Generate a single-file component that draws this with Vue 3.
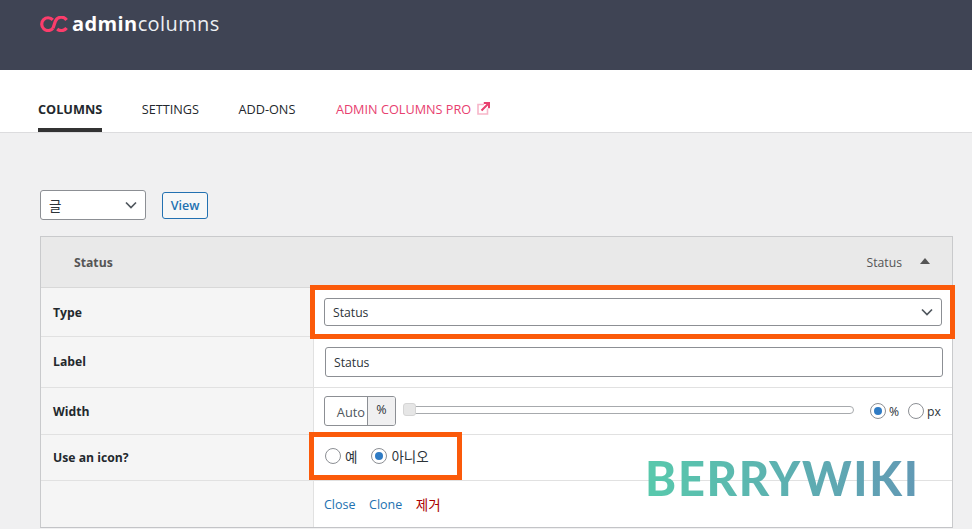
<template>
  <div class="page">
    <header class="top">
      <div class="logo">
        <svg class="logo-icon" width="28" height="16" viewBox="0 0 28 16" fill="none" stroke="#fb3d6b" stroke-width="3.200">
          <path d="M12.800 3.800A6.400 6.400 0 1 0 13 12.300" />
          <path d="M26.600 4A6.400 6.400 0 0 0 15.300 5.400L13 12.300" />
          <path d="M17.200 13A6.400 6.400 0 0 0 26.600 12" />
        </svg>
        <span class="logo-text"><b>admin</b>columns</span>
      </div>
    </header>

    <nav class="tabs">
      <a v-for="tab in tabs" :key="tab.label" class="tab" :class="{ active: tab.active, pro: tab.pro }">
        {{ tab.label }}
        <svg v-if="tab.pro" class="ext" width="13" height="13" viewBox="0 0 13 13" fill="none">
          <path d="M7 2.500H1v9.500h9.500V6.500" stroke="#f7b6c9" stroke-width="1.600" />
          <path d="M4.500 8.500L11 2M6.800 1h5.200v5.200" stroke="#e8406f" stroke-width="2" />
        </svg>
      </a>
    </nav>

    <main class="content">
      <div class="toolbar">
        <div class="select small">
          <span class="korean big">글</span>
          <svg class="chev" width="12" height="8" viewBox="0 0 12 8" fill="none"><path d="M1 1.500l5 5 5-5" stroke="#50575e" stroke-width="1.700" /></svg>
        </div>
        <button class="view">View</button>
      </div>

      <section class="box">
        <div class="box-head">
          <strong>Status</strong>
          <span class="head-right">
            <span>Status</span>
            <i class="arrow"></i>
          </span>
        </div>

        <div class="row row-type">
          <div class="label">Type</div>
          <div class="cell">
            <div class="select wide">
              <span>Status</span>
              <svg class="chev" width="12" height="8" viewBox="0 0 12 8" fill="none"><path d="M1 1.500l5 5 5-5" stroke="#50575e" stroke-width="1.700" /></svg>
            </div>
            <div class="mark mark-type"></div>
          </div>
        </div>

        <div class="row row-label">
          <div class="label">Label</div>
          <div class="cell"><input class="text" value="Status" /></div>
        </div>

        <div class="row row-width">
          <div class="label">Width</div>
          <div class="cell width-cell">
            <div class="width-input">
              <span class="auto">Auto</span>
              <span class="unit">%</span>
            </div>
            <div class="slider"><span class="thumb"></span></div>
            <div class="units">
              <label class="radio"><i class="dot on"></i>%</label>
              <label class="radio"><i class="dot"></i>px</label>
            </div>
          </div>
        </div>

        <div class="row row-icon">
          <div class="label">Use an icon?</div>
          <div class="cell icon-cell">
            <label class="radio"><i class="dot"></i><span class="korean big">예</span></label>
            <label class="radio"><i class="dot on"></i><span class="korean big">아니오</span></label>
            <div class="mark mark-icon"></div>
          </div>
        </div>

        <div class="row row-actions">
          <div class="label"></div>
          <div class="cell actions">
            <a>Close</a>
            <a>Clone</a>
            <a class="remove korean big">제거</a>
          </div>
        </div>
      </section>
    </main>

    <div class="watermark">BERRYWIKI</div>
  </div>
</template>

<script setup>
const tabs = [
  { label: "COLUMNS", active: true },
  { label: "SETTINGS" },
  { label: "ADD-ONS" },
  { label: "ADMIN COLUMNS PRO", pro: true },
];
</script>

<style>
html,
body {
  margin: 0;
  background: #f0f0f1;
  overflow: hidden;
}
</style>

<style scoped>
.page {
  position: relative;
  height: 529px;
  overflow: hidden;
  font-family: "Open Sans", "Noto Sans CJK KR", sans-serif;
  font-size: 12.200px;
  color: #2c3338;
  background: #f0f0f1;
}

.top {
  height: 70px;
  box-sizing: border-box;
  padding: 12px 0 0 40px;
  background: #3f4454;
}

.logo {
  display: flex;
  align-items: center;
  gap: 4px;
}

.logo-text {
  font-size: 20px;
  line-height: 24px;
  color: #eef0f3;
  letter-spacing: 0.400px;
}

.logo-text b {
  font-weight: 700;
  color: #fff;
}

.tabs {
  display: flex;
  height: 62px;
  padding-left: 38px;
  gap: 39.500px;
  background: #fff;
  border-bottom: 1px solid #dcdcde;
}

.tab {
  display: flex;
  align-items: flex-start;
  gap: 6px;
  height: 62px;
  box-sizing: border-box;
  padding-top: 31px;
  font-size: 12.700px;
  line-height: 17px;
  color: #23282d;
}

.tab.active {
  font-weight: 700;
  border-bottom: 4px solid #333;
}

.tab.pro {
  margin-left: 1px;
  color: #e8406f;
}

.ext {
  margin-top: 1px;
}

.content {
  padding: 57px 19px 0 40px;
}

.toolbar {
  display: flex;
  align-items: center;
  gap: 16px;
  height: 30px;
  margin-bottom: 16px;
}

.select {
  display: flex;
  align-items: center;
  justify-content: space-between;
  box-sizing: border-box;
  background: #fff;
  border: 1px solid #8c8f94;
  border-radius: 3px;
}

.select.small {
  width: 106px;
  height: 30px;
  padding: 0 8px 0 8px;
}

.select.wide {
  width: 618px;
  height: 28px;
  padding: 0 8px;
}

.korean {
  font-family: "Noto Sans CJK KR", sans-serif;
}

.big {
  font-size: 13.500px;
}

.view {
  width: 46px;
  height: 27px;
  padding: 0;
  font: 600 12.500px "Open Sans", sans-serif;
  color: #2271b1;
  background: #f6f7f7;
  border: 1px solid #2271b1;
  border-radius: 3px;
}

.box {
  border: 1px solid #c9cacc;
  border-bottom-color: #c3c4c7;
  background: #fff;
  height: 292px;
  box-sizing: border-box;
}

.box-head {
  display: flex;
  align-items: center;
  justify-content: space-between;
  box-sizing: border-box;
  height: 51px;
  padding: 0 22px 0 33px;
  background: #e9e9e9;
  border-bottom: 1px solid #d8d8d8;
  color: #555;
}

.head-right {
  display: flex;
  align-items: center;
  gap: 18px;
}

.arrow {
  width: 0;
  height: 0;
  margin-bottom: 2px;
  border-left: 5px solid transparent;
  border-right: 5px solid transparent;
  border-bottom: 6px solid #555;
}

.row {
  display: flex;
  box-sizing: border-box;
  border-bottom: 1px solid #e1e1e1;
}

.row:last-child {
  border-bottom: none;
}

.row-type { height: 49px; }
.row-label { height: 51px; }
.row-width { height: 47px; }
.row-icon { height: 46px; }
.row-actions { height: 46px; }

.label {
  flex: 0 0 273px;
  box-sizing: border-box;
  display: flex;
  align-items: center;
  padding-left: 12px;
  font-weight: 700;
  color: #23282d;
  background: #f5f5f5;
  border-right: 1px solid #e1e1e1;
}

.row-label .label {
  padding-bottom: 2px;
}

.row-width .label {
  padding-top: 1px;
}

.cell {
  position: relative;
  flex: 1;
  display: flex;
  align-items: center;
  padding-left: 10px;
}

.row-label .cell {
  padding-left: 11px;
}

.text {
  width: 618px;
  height: 30px;
  box-sizing: border-box;
  padding: 0 8px;
  font: inherit;
  color: #2c3338;
  border: 1px solid #8c8f94;
  border-radius: 3px;
  outline: none;
}

.width-cell {
  gap: 7px;
}

.width-input {
  display: flex;
  width: 72px;
  height: 30px;
  box-sizing: border-box;
  background: #fff;
  border: 1px solid #8c8f94;
  border-radius: 3px;
  overflow: hidden;
}

.auto {
  flex: 1;
  text-align: right;
  font-size: 12.800px;
  line-height: 30px;
  padding-right: 2px;
  color: #50575e;
}

.unit {
  width: 27px;
  text-align: center;
  line-height: 26px;
  font-size: 12.500px;
  background: #f0f0f1;
  border-left: 1px solid #8c8f94;
}

.slider {
  position: relative;
  width: 451px;
  height: 8px;
  margin-bottom: 2px;
  box-sizing: border-box;
  background: #fff;
  border: 1px solid #a7aaad;
  border-radius: 4px;
}

.thumb {
  position: absolute;
  left: -1px;
  top: -4px;
  width: 13px;
  height: 13px;
  box-sizing: border-box;
  background: #e6e6e6;
  border: 1px solid #d5d5d5;
  border-radius: 3px;
}

.units {
  display: flex;
  gap: 9px;
  margin-left: 9px;
}

.radio {
  display: flex;
  align-items: center;
  gap: 3px;
  color: #2c3338;
}

.dot {
  position: relative;
  width: 16px;
  height: 16px;
  box-sizing: border-box;
  background: #fff;
  border: 1px solid #8c8f94;
  border-radius: 50%;
}

.dot.on::after {
  content: "";
  position: absolute;
  left: 3px;
  top: 3px;
  width: 8px;
  height: 8px;
  border-radius: 50%;
  background: #2f7bc4;
}

.icon-cell {
  gap: 14px;
  padding-left: 11px;
  padding-bottom: 3px;
}

.icon-cell .radio {
  gap: 4px;
}

.actions {
  gap: 13.500px;
  padding-left: 10px;
  font-size: 12.500px;
  color: #2271b1;
}

.remove {
  color: #a00;
}

.mark {
  position: absolute;
  box-sizing: border-box;
  border: 5px solid #fb5a0a;
  pointer-events: none;
}

.mark-type {
  left: -4px;
  top: -3px;
  width: 645px;
  height: 54px;
}

.mark-icon {
  left: -5px;
  top: -3px;
  width: 153px;
  height: 48px;
}

.watermark {
  position: absolute;
  left: 645px;
  top: 448px;
  font-family: "Lato", sans-serif;
  font-size: 47px;
  line-height: 60px;
  font-weight: 900;
  letter-spacing: 1.700px;
  color: transparent;
  background: linear-gradient(90deg, #58c9ac, #6299b5);
  -webkit-background-clip: text;
  background-clip: text;
}
</style>
